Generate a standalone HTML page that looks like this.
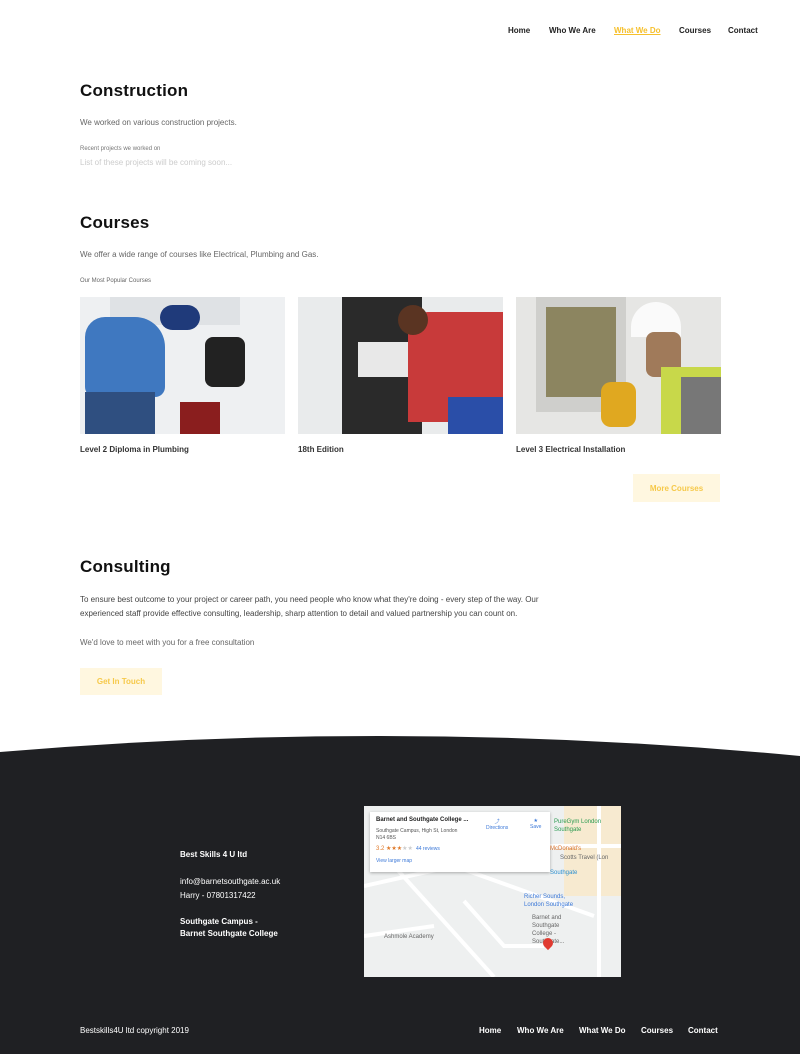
<!DOCTYPE html>
<html><head><meta charset="utf-8"><style>
*{margin:0;padding:0;box-sizing:border-box}
body{width:800px;height:1054px;background:#fff;font-family:"Liberation Sans",sans-serif;position:relative;overflow:hidden;color:#1b1b1b}
.a{position:absolute;white-space:nowrap}
.nav{font-size:8px;font-weight:bold;color:#222}
h2{position:absolute;font-size:17px;font-weight:bold;color:#111;letter-spacing:.2px}
.p{font-size:8px;color:#666}
.img{position:absolute;top:297px;width:205px;height:137px;overflow:hidden}
.cap{font-size:8px;font-weight:bold;color:#333;top:445px}
.btn{position:absolute;background:#fff7e0;color:#f6c94a;font-size:8px;font-weight:bold;display:flex;align-items:center;justify-content:center}
.f{color:#fff;font-size:8px}
</style></head><body>
<div class="a nav" style="left:508px;top:26px">Home</div>
<div class="a nav" style="left:549px;top:26px">Who We Are</div>
<div class="a nav" style="left:614px;top:26px;color:#f6c02c;text-decoration:underline">What We Do</div>
<div class="a nav" style="left:679px;top:26px">Courses</div>
<div class="a nav" style="left:728px;top:26px">Contact</div>

<h2 style="left:80px;top:81px">Construction</h2>
<div class="a p" style="left:80px;top:118px">We worked on various construction projects.</div>
<div class="a" style="left:80px;top:146px;font-size:6px;color:#777">Recent projects we worked on</div>
<div class="a" style="left:80px;top:158px;font-size:8px;color:#ccc">List of these projects will be coming soon...</div>

<h2 style="left:80px;top:213px">Courses</h2>
<div class="a p" style="left:80px;top:250px">We offer a wide range of courses like Electrical, Plumbing and Gas.</div>
<div class="a" style="left:80px;top:278px;font-size:6px;color:#666">Our Most Popular Courses</div>

<div class="img" style="left:80px;background:#eef0f2">
<div style="position:absolute;left:30px;top:0;width:130px;height:28px;background:#dfe2e5"></div>
<div style="position:absolute;left:5px;top:20px;width:80px;height:80px;background:#3f78c0;border-radius:20px 30px 10px 10px"></div>
<div style="position:absolute;left:80px;top:8px;width:40px;height:25px;background:#1f3a7a;border-radius:15px"></div>
<div style="position:absolute;left:5px;top:95px;width:70px;height:42px;background:#2f4f80"></div>
<div style="position:absolute;left:125px;top:40px;width:40px;height:50px;background:#222;border-radius:8px"></div>
<div style="position:absolute;left:100px;top:105px;width:40px;height:32px;background:#8a1e1e"></div>
</div>
<div class="img" style="left:298px;background:#e9ebec">
<div style="position:absolute;left:44px;top:0;width:80px;height:137px;background:#2a2a2a"></div>
<div style="position:absolute;left:60px;top:45px;width:50px;height:35px;background:#e8e8e8"></div>
<div style="position:absolute;left:110px;top:15px;width:95px;height:110px;background:#c83a3a;border-radius:20px 0 0 0"></div>
<div style="position:absolute;left:100px;top:8px;width:30px;height:30px;background:#5a3422;border-radius:50%"></div>
<div style="position:absolute;left:150px;top:100px;width:55px;height:37px;background:#2a4ea8"></div>
</div>
<div class="img" style="left:516px;background:#e6e6e4">
<div style="position:absolute;left:20px;top:0;width:90px;height:115px;background:#cfcfcc"></div>
<div style="position:absolute;left:30px;top:10px;width:70px;height:90px;background:#8c8560"></div>
<div style="position:absolute;left:115px;top:5px;width:50px;height:35px;background:#fafafa;border-radius:25px 25px 0 0"></div>
<div style="position:absolute;left:130px;top:35px;width:35px;height:45px;background:#a07a5a;border-radius:8px"></div>
<div style="position:absolute;left:145px;top:70px;width:60px;height:67px;background:#c8d84a"></div>
<div style="position:absolute;left:165px;top:80px;width:40px;height:57px;background:#777"></div>
<div style="position:absolute;left:85px;top:85px;width:35px;height:45px;background:#e0a820;border-radius:10px"></div>
</div>
<div class="a cap" style="left:80px">Level 2 Diploma in Plumbing</div>
<div class="a cap" style="left:298px">18th Edition</div>
<div class="a cap" style="left:516px">Level 3 Electrical Installation</div>
<div class="btn" style="left:633px;top:474px;width:87px;height:28px">More Courses</div>

<h2 style="left:80px;top:557px">Consulting</h2>
<div class="a" style="left:80px;top:593px;font-size:8px;color:#444;line-height:14px">To ensure best outcome to your project or career path, you need people who know what they're doing - every step of the way. Our<br>experienced staff provide effective consulting, leadership, sharp attention to detail and valued partnership you can count on.</div>
<div class="a p" style="left:80px;top:638px">We'd love to meet with you for a free consultation</div>
<div class="btn" style="left:80px;top:668px;width:82px;height:27px">Get In Touch</div>

<svg style="position:absolute;left:0;top:730px" width="800" height="324"><path d="M0 22 Q400 -12 800 26 L800 324 L0 324Z" fill="#1f2023"/></svg>

<div class="a f" style="left:180px;top:850px;font-weight:bold">Best Skills 4 U ltd</div>
<div class="a f" style="left:180px;top:875px;line-height:14px">info@barnetsouthgate.ac.uk<br>Harry - 07801317422</div>
<div class="a f" style="left:180px;top:916px;line-height:12px;font-weight:bold">Southgate Campus -<br>Barnet Southgate College</div>

<div style="position:absolute;left:364px;top:806px;width:257px;height:171px;background:#eef0f0;overflow:hidden">
<div style="position:absolute;left:200px;top:0;width:60px;height:90px;background:#f7ead0"></div>
<svg style="position:absolute;left:0;top:0" width="257" height="171"><g stroke="#fff" stroke-width="4" fill="none"><path d="M0 80 L90 60 L230 110"/><path d="M30 60 L130 171"/><path d="M0 130 L70 120"/><path d="M100 95 L140 140 L180 140"/><path d="M235 0 L235 171"/><path d="M180 40 L257 40"/></g></svg>
<div style="position:absolute;left:6px;top:6px;width:180px;height:60px;background:#fff;box-shadow:0 1px 3px rgba(0,0,0,.3)"></div>
<div class="a" style="left:12px;top:11px;font-size:6px;font-weight:bold;color:#222">Barnet and Southgate College ...</div>
<div class="a" style="left:12px;top:22px;font-size:5px;color:#555;line-height:7px">Southgate Campus, High St, London<br>N14 6BS</div>
<div class="a" style="left:12px;top:39px;font-size:6px;color:#e07a2a">3.2 ★★★<span style="color:#ccc">★★</span> <span style="color:#3b78d8;font-size:5px">&nbsp;44 reviews</span></div>
<div class="a" style="left:12px;top:52px;font-size:5px;color:#3b78d8">View larger map</div>
<div class="a" style="left:122px;top:12px;font-size:5px;color:#3b78d8;text-align:center">⤴<br>Directions</div>
<div class="a" style="left:166px;top:12px;font-size:5px;color:#3b78d8;text-align:center">★<br>Save</div>
<div class="a" style="left:190px;top:12px;font-size:6px;color:#2a9a50;line-height:8px">PureGym London<br>Southgate</div>
<div class="a" style="left:186px;top:40px;font-size:6px;color:#d8702a">McDonald's</div>
<div class="a" style="left:196px;top:49px;font-size:6px;color:#666">Scotts Travel (Lon</div>
<div class="a" style="left:186px;top:64px;font-size:6px;color:#2a8fd0">Southgate</div>
<div class="a" style="left:160px;top:87px;font-size:6px;color:#3b78d8;line-height:8px">Richer Sounds,<br>London Southgate</div>
<div class="a" style="left:168px;top:108px;font-size:6px;color:#666;line-height:8px">Barnet and<br>Southgate<br>College -<br>Southgate...</div>
<div class="a" style="left:20px;top:128px;font-size:6px;color:#666">Ashmole Academy</div>
<div style="position:absolute;left:179px;top:132px;width:10px;height:10px;background:#e03a30;border-radius:50% 50% 50% 0;transform:rotate(-45deg)"></div>
</div>

<div class="a f" style="left:80px;top:1026px">Bestskills4U ltd copyright 2019</div>
<div class="a f" style="left:479px;top:1026px;font-weight:bold">Home</div>
<div class="a f" style="left:517px;top:1026px;font-weight:bold">Who We Are</div>
<div class="a f" style="left:579px;top:1026px;font-weight:bold">What We Do</div>
<div class="a f" style="left:641px;top:1026px;font-weight:bold">Courses</div>
<div class="a f" style="left:688px;top:1026px;font-weight:bold">Contact</div>
</body></html>
